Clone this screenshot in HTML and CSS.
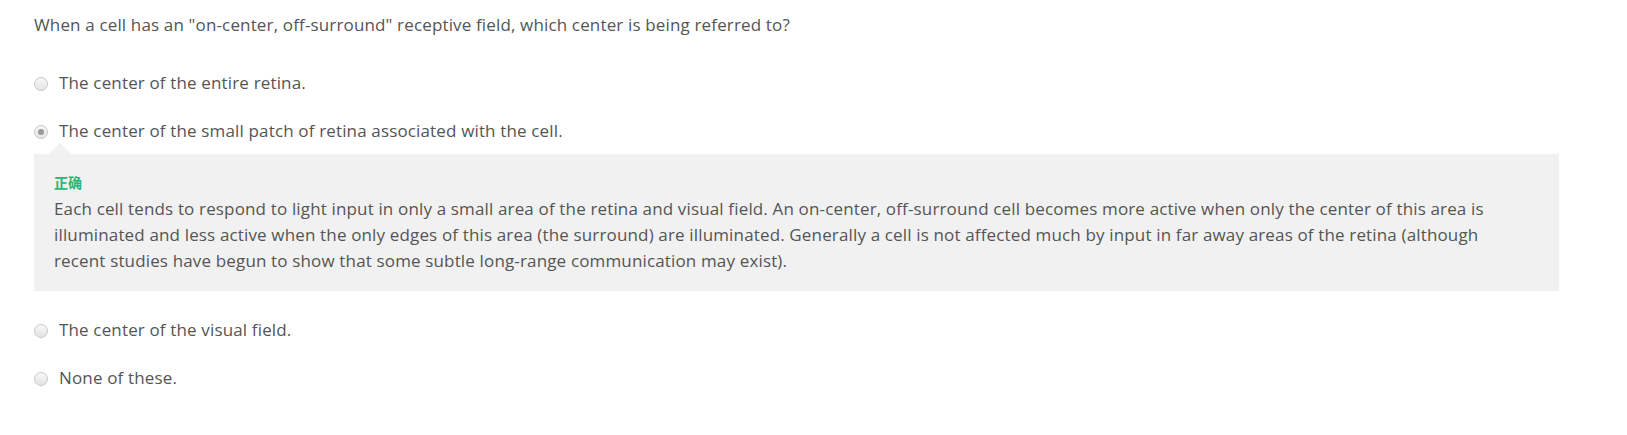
FILE: index.html
```html
<!DOCTYPE html>
<html lang="en">
<head>
<meta charset="utf-8">
<title>Quiz question</title>
<link rel="stylesheet" href="styles.css">
</head>
<body>
<div class="quiz">
  <p class="question">When a cell has an "on-center, off-surround" receptive field, which center is being referred to?</p>
  <div class="choices">
    <label class="option first"><input type="radio" name="q1" class="radio"><span>The center of the entire retina.</span></label>
    <label class="option"><input type="radio" name="q1" class="radio" checked><span>The center of the small patch of retina associated with the cell.</span></label>
    <div class="feedback">
      <div class="verdict">正确</div>
      <div class="explanation">Each cell tends to respond to light input in only a small area of the retina and visual field. An on-center, off-surround cell becomes more active when only the center of this area is illuminated and less active when the only edges of this area (the surround) are illuminated. Generally a cell is not affected much by input in far away areas of the retina (although recent studies have begun to show that some subtle long-range communication may exist).</div>
    </div>
    <label class="option after-feedback"><input type="radio" name="q1" class="radio"><span>The center of the visual field.</span></label>
    <label class="option"><input type="radio" name="q1" class="radio"><span>None of these.</span></label>
  </div>
</div>
</body>
</html>
```
FILE: styles.css
```css
html, body {
  margin: 0;
  padding: 0;
  background: #ffffff;
}

body {
  font-family: "Open Sans", "Noto Sans CJK SC", sans-serif;
  font-size: 17px;
  letter-spacing: 0.15px;
  color: #555555;
}

.quiz {
  padding-left: 34px;
  width: 1525px;
}

.question {
  margin: 12px 0 0;
  line-height: 26px;
}

.choices {
  display: flex;
  flex-direction: column;
}

.option {
  display: flex;
  align-items: center;
  line-height: 26px;
  margin-top: 22px;
}

.option.first {
  margin-top: 32px;
}

.option.after-feedback {
  margin-top: 26px;
}

.radio {
  -webkit-appearance: none;
  appearance: none;
  width: 14px;
  height: 14px;
  margin: 2px 11px 0 0;
  border-radius: 50%;
  border: 1px solid #c9c9c9;
  background: linear-gradient(#f7f7f7, #e4e4e4);
  box-sizing: border-box;
  position: relative;
  flex: none;
}

.radio:checked::after {
  content: "";
  position: absolute;
  left: 3px;
  top: 3px;
  width: 6px;
  height: 6px;
  border-radius: 50%;
  background: #9a9a9a;
}

.feedback {
  position: relative;
  margin-top: 10px;
  background: #f1f1f1;
  padding: 19px 40px 17px 20px;
}

.feedback::before {
  content: "";
  position: absolute;
  top: -11px;
  left: 15px;
  border-left: 11px solid transparent;
  border-right: 11px solid transparent;
  border-bottom: 11px solid #f1f1f1;
}

.verdict {
  font-size: 14px;
  letter-spacing: 0;
  line-height: 20px;
  font-weight: bold;
  color: #2bb673;
  margin-bottom: 3px;
}

.explanation {
  line-height: 26px;
}
```
